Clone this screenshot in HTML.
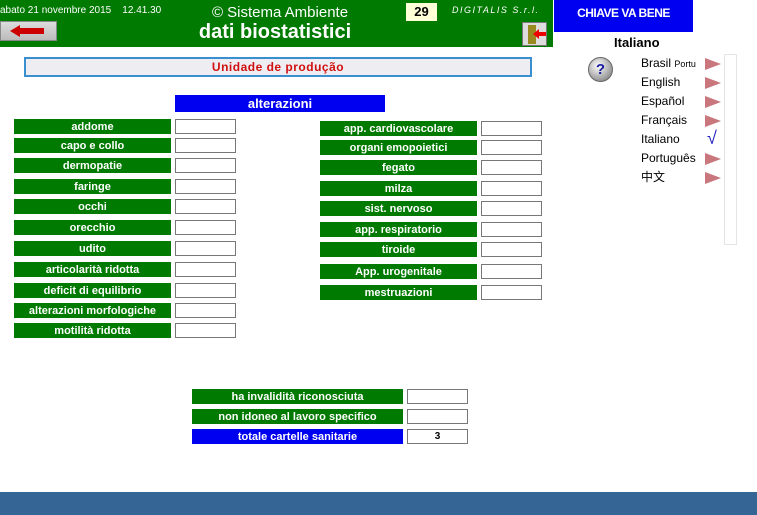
<!DOCTYPE html>
<html><head><meta charset="utf-8"><style>
*{margin:0;padding:0;box-sizing:border-box}
body{width:757px;height:515px;background:#fff;position:relative;overflow:hidden;font-family:"Liberation Sans",Arial,sans-serif}
.a{position:absolute}
.g{position:absolute;background:#007a00;color:#fff;font-weight:bold;font-size:11px;text-align:center;line-height:17px;height:15px;overflow:hidden}
.i{position:absolute;background:#fff;border:1px solid #777;height:15px;width:61px;font-size:10px;text-align:center;line-height:13px;font-weight:bold}
.l{position:absolute;left:641px;font-size:12px;color:#000}
.ar{position:absolute;left:705px;width:0;height:0;border-top:6px solid transparent;border-bottom:6px solid transparent;border-left:16px solid #c9777d}
</style></head><body>
<div class="a" style="left:0;top:0;width:553px;height:47px;background:#007a00"></div>
<div class="a" style="left:0;top:5px;font-size:10px;color:#fff">abato 21 novembre 2015&nbsp;&nbsp;&nbsp;&nbsp;12.41.30</div>
<div class="a" style="left:195px;top:4px;width:170px;text-align:center;font-size:15px;color:#fff">© Sistema Ambiente</div>
<div class="a" style="left:190px;top:21px;width:170px;text-align:center;font-size:20px;font-weight:bold;color:#fff">dati biostatistici</div>
<div class="a" style="left:406px;top:3px;width:31px;height:18px;background:#ffffd8;font-weight:bold;font-size:13px;text-align:center;line-height:18px">29</div>
<div class="a" style="left:452px;top:5px;font-size:9px;font-style:italic;color:#fff;letter-spacing:1.5px">DIGITALIS S.r.l.</div>
<div class="a" style="left:0;top:21px;width:57px;height:20px;background:linear-gradient(#ddd,#bbb);border:1px solid #888"></div>
<svg class="a" style="left:8px;top:24px" width="40" height="14"><polygon points="2,7 12,1 12,4 36,4 36,10 12,10 12,13" fill="#c00"/></svg>
<div class="a" style="left:522px;top:22px;width:25px;height:24px;background:#ddd;border:1px solid #777"></div>
<div class="a" style="left:528px;top:25px;width:8px;height:19px;background:#998a20"></div>
<svg class="a" style="left:533px;top:28px" width="14" height="12"><polygon points="0,6 6,1 6,4 13,4 13,8 6,8 6,11" fill="#e00"/></svg>
<div class="a" style="left:554px;top:0;width:139px;height:32px;background:#0000f0;color:#fff;font-weight:bold;font-size:12px;text-align:center;padding-top:6px;letter-spacing:-0.5px">CHIAVE VA BENE</div>
<div class="a" style="left:614px;top:35px;font-size:13px;font-weight:bold">Italiano</div>
<div class="a" style="left:588px;top:57px;width:25px;height:25px;border-radius:50%;background:radial-gradient(circle at 40% 35%,#fff,#999 70%,#666);border:1px solid #666;color:#1a1aa0;font-weight:bold;font-size:15px;text-align:center;line-height:23px">?</div>
<div class="l" style="top:56px">Brasil <span style="font-size:9px">Portu</span></div><div class="ar" style="top:58px"></div>
<div class="l" style="top:75px">English</div><div class="ar" style="top:77px"></div>
<div class="l" style="top:94px">Español</div><div class="ar" style="top:96px"></div>
<div class="l" style="top:113px">Français</div><div class="ar" style="top:115px"></div>
<div class="l" style="top:132px">Italiano</div><div class="a" style="left:707px;top:128px;color:#2020c0;font-size:18px">√</div>
<div class="l" style="top:151px">Português</div><div class="ar" style="top:153px"></div>
<div class="l" style="top:168px;font-family:'Liberation Sans','Noto Sans CJK SC',sans-serif">中文</div><div class="ar" style="top:172px"></div>
<div class="a" style="left:724px;top:54px;width:13px;height:191px;border:1px solid #e4e4e4"></div>
<div class="a" style="left:24px;top:57px;width:508px;height:20px;background:#eeeef2;border:2px solid #3a8fd0;color:#d01010;font-weight:bold;font-size:12px;text-align:center;line-height:16px;letter-spacing:0.5px">Unidade de produção</div>
<div class="a" style="left:175px;top:95px;width:210px;height:17px;background:#0000f0;color:#fff;font-weight:bold;font-size:13px;text-align:center;line-height:18px">alterazioni</div>

<div class="g" style="left:14px;top:119px;width:157px">addome</div><div class="i" style="left:175px;top:119px"></div>
<div class="g" style="left:14px;top:138px;width:157px">capo e collo</div><div class="i" style="left:175px;top:138px"></div>
<div class="g" style="left:14px;top:158px;width:157px">dermopatie</div><div class="i" style="left:175px;top:158px"></div>
<div class="g" style="left:14px;top:179px;width:157px">faringe</div><div class="i" style="left:175px;top:179px"></div>
<div class="g" style="left:14px;top:199px;width:157px">occhi</div><div class="i" style="left:175px;top:199px"></div>
<div class="g" style="left:14px;top:220px;width:157px">orecchio</div><div class="i" style="left:175px;top:220px"></div>
<div class="g" style="left:14px;top:241px;width:157px">udito</div><div class="i" style="left:175px;top:241px"></div>
<div class="g" style="left:14px;top:262px;width:157px">articolarità ridotta</div><div class="i" style="left:175px;top:262px"></div>
<div class="g" style="left:14px;top:283px;width:157px">deficit di equilibrio</div><div class="i" style="left:175px;top:283px"></div>
<div class="g" style="left:14px;top:303px;width:157px">alterazioni morfologiche</div><div class="i" style="left:175px;top:303px"></div>
<div class="g" style="left:14px;top:323px;width:157px">motilità ridotta</div><div class="i" style="left:175px;top:323px"></div>

<div class="g" style="left:320px;top:121px;width:157px">app. cardiovascolare</div><div class="i" style="left:481px;top:121px"></div>
<div class="g" style="left:320px;top:140px;width:157px">organi emopoietici</div><div class="i" style="left:481px;top:140px"></div>
<div class="g" style="left:320px;top:160px;width:157px">fegato</div><div class="i" style="left:481px;top:160px"></div>
<div class="g" style="left:320px;top:181px;width:157px">milza</div><div class="i" style="left:481px;top:181px"></div>
<div class="g" style="left:320px;top:201px;width:157px">sist. nervoso</div><div class="i" style="left:481px;top:201px"></div>
<div class="g" style="left:320px;top:222px;width:157px">app. respiratorio</div><div class="i" style="left:481px;top:222px"></div>
<div class="g" style="left:320px;top:242px;width:157px">tiroide</div><div class="i" style="left:481px;top:242px"></div>
<div class="g" style="left:320px;top:264px;width:157px">App. urogenitale</div><div class="i" style="left:481px;top:264px"></div>
<div class="g" style="left:320px;top:285px;width:157px">mestruazioni</div><div class="i" style="left:481px;top:285px"></div>

<div class="g" style="left:192px;top:389px;width:211px">ha invalidità riconosciuta</div><div class="i" style="left:407px;top:389px"></div>
<div class="g" style="left:192px;top:409px;width:211px">non idoneo al lavoro specifico</div><div class="i" style="left:407px;top:409px"></div>
<div class="g" style="left:192px;top:429px;width:211px;background:#0000f0">totale cartelle sanitarie</div><div class="i" style="left:407px;top:429px">3</div>

<div class="a" style="left:0;top:492px;width:757px;height:23px;background:#356595"></div>
</body></html>
